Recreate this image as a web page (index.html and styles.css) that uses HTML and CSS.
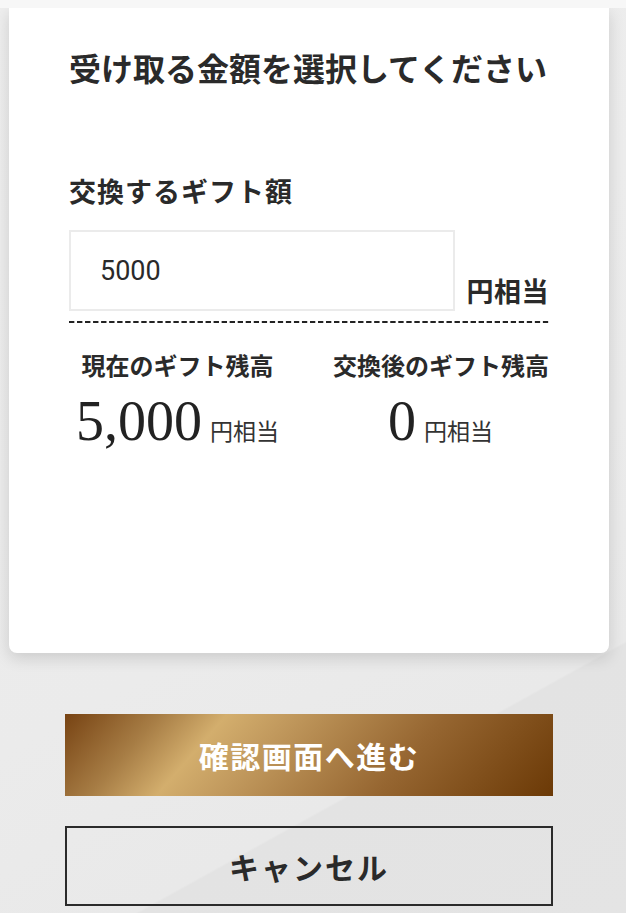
FILE: index.html
```html
<!DOCTYPE html>
<html lang="ja">
<head>
<meta charset="utf-8">
<title>受け取る金額を選択してください</title>
<link rel="stylesheet" href="styles.css">
</head>
<body>
<div class="topbar"></div>
<main class="card">
  <h1 class="title">受け取る金額を選択してください</h1>
  <p class="label">交換するギフト額</p>
  <div class="amount-row">
    <input class="amount-input" type="text" value="5000">
    <span class="amount-unit">円相当</span>
  </div>
  <div class="dashed"></div>
  <div class="balances">
    <div class="balance">
      <p class="balance-label">現在のギフト残高</p>
      <p class="balance-value"><span class="num">5,000</span><span class="unit">円相当</span></p>
    </div>
    <div class="balance">
      <p class="balance-label">交換後のギフト残高</p>
      <p class="balance-value"><span class="num">0</span><span class="unit">円相当</span></p>
    </div>
  </div>
</main>
<div class="actions">
  <button class="btn btn-gold" type="button">確認画面へ進む</button>
  <button class="btn btn-outline" type="button">キャンセル</button>
</div>
</body>
</html>
```

FILE: styles.css
```css
html, body {
  margin: 0;
  padding: 0;
}
body {
  width: 626px;
  min-height: 913px;
  font-family: "Noto Sans CJK JP", "Noto Sans", sans-serif;
  color: #2a2a2a;
  background: linear-gradient(151deg, #eeeeee 0%, #ebebeb 60%, #e9e9e9 78.4%, #e3e3e3 78.6%, #e4e4e4 100%);
  overflow: hidden;
}
.topbar {
  position: relative;
  z-index: 1;
  height: 8px;
  background: #f7f7f7;
}
.card {
  margin: 0 17px 0 9px;
  padding: 37px 60px 204px;
  background: #ffffff;
  border-radius: 0 0 8px 8px;
  box-shadow: 0 5px 16px rgba(0, 0, 0, 0.14);
}
.title {
  margin: 0;
  font-size: 32px;
  line-height: 44px;
  font-weight: 700;
  letter-spacing: 0;
  white-space: nowrap;
}
.label {
  margin: 84px 0 0;
  font-size: 27px;
  line-height: 36px;
  font-weight: 700;
  letter-spacing: 1px;
}
.amount-row {
  margin-top: 21px;
  display: flex;
  justify-content: space-between;
  align-items: flex-end;
}
.amount-input {
  box-sizing: border-box;
  width: 386px;
  height: 81px;
  margin: 0;
  padding: 0 0 0 29px;
  border: 2px solid #ebebeb;
  border-radius: 0;
  background: #fff;
  font-family: Roboto, "Liberation Sans", sans-serif;
  font-size: 27px;
  color: #2a2a2a;
  outline: none;
}
.amount-unit {
  font-size: 27px;
  line-height: 27px;
  font-weight: 700;
  margin-bottom: 7px;
  letter-spacing: 0.5px;
}
.dashed {
  margin-top: 10px;
  height: 2px;
  background-image: linear-gradient(to right, #222 0 5.3px, transparent 5.3px);
  background-size: 8.045px 2px;
  background-repeat: repeat-x;
}
.balances {
  margin-top: 26px;
  display: grid;
  grid-template-columns: 217px 215px;
  column-gap: 47px;
}
.balance {
  text-align: center;
}
.balance-label {
  margin: 0;
  font-size: 24px;
  line-height: 32px;
  font-weight: 700;
  white-space: nowrap;
}
.balance-value {
  margin: 12px 0 0;
  line-height: 1;
  white-space: nowrap;
}
.num {
  font-family: "Liberation Serif", serif;
  font-size: 56px;
  line-height: 1;
  color: #222;
}
.unit {
  margin-left: 8px;
  font-size: 23px;
  line-height: 1;
  color: #333;
}
.actions {
  margin: 61px 17px 0 9px;
  padding: 0 56px;
  display: flex;
  flex-direction: column;
  gap: 30px;
}
.btn {
  display: block;
  width: 100%;
  margin: 0;
  font-family: "Noto Sans CJK JP", "Noto Sans", sans-serif;
  font-weight: 700;
  font-size: 30px;
  cursor: pointer;
}
.btn-gold {
  height: 82px;
  border: 0;
  color: #ffffff;
  letter-spacing: 1.5px;
  background: linear-gradient(131deg, #774313 0%, #a77d45 17%, #d3ae6d 29%, #c29a5e 40%, #966631 68%, #6b3906 100%);
}
.btn-outline {
  height: 80px;
  border: 2px solid #2b2b2b;
  background: transparent;
  color: #2a2a2a;
  letter-spacing: 2px;
}
```
